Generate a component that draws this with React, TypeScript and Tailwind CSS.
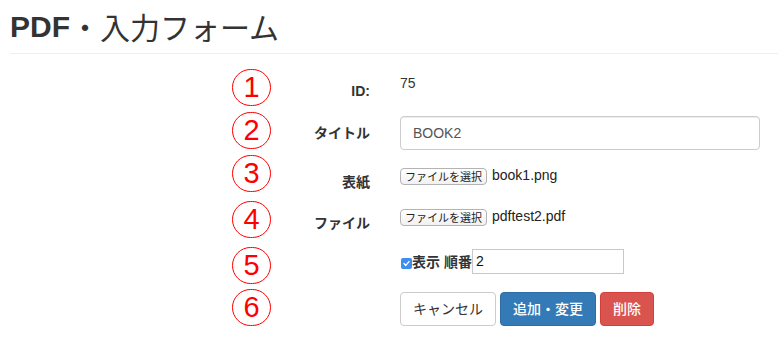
import React from 'react';

function Circle({ n, className }: { n: string; className: string }) {
  return (
    <div
      className={
        'flex h-[37px] w-[39px] items-center justify-center rounded-full border-[1.5px] border-[#ff0000] ' +
        className
      }
    >
      <span className="font-['Liberation_Sans',sans-serif] text-[29px] leading-none text-[#ff0000]">{n}</span>
    </div>
  );
}

function FileBtn() {
  return (
    <span className="mt-[3px] flex h-[17px] items-center rounded-[4px] border border-[#b3b3b3] bg-gradient-to-b from-white to-[#f1f1f1] px-[4px] font-['Noto_Sans_CJK_JP',sans-serif] text-[11px] leading-none text-[#222]">
      ファイルを選択
    </span>
  );
}

export default function App() {
  return (
    <div className="h-[346px] w-[778px] overflow-hidden bg-white font-['Liberation_Sans','Noto_Sans_CJK_JP',sans-serif] text-[14px] text-[#333]">
      <div className="pl-[10px]">
        <h2 className="flex h-[44px] items-end pb-[1px] text-[30px] leading-[33px] text-[#333]">
          <span className="font-bold">PDF</span>
          <span className="font-['Noto_Sans_CJK_JP',sans-serif] font-normal">・入力フォーム</span>
        </h2>
        <div className="mt-[9px] h-px bg-[#eeeeee]" />
      </div>

      <div className="flex">
        <div className="ml-[232px] flex w-[40px] flex-col">
          <Circle n="1" className="mt-[15px]" />
          <Circle n="2" className="mt-[6px]" />
          <Circle n="3" className="mt-[6px]" />
          <Circle n="4" className="mt-[9px]" />
          <Circle n="5" className="mt-[9px]" />
          <Circle n="6" className="mt-[5px]" />
        </div>

        <div className="flex flex-col">
          {/* ID */}
          <div className="mt-[19px] flex h-[28px]">
            <div className="w-[98px] pt-[8px] text-right font-bold leading-[20px]">ID:</div>
            <div className="ml-[30px] w-[360px] leading-[20px]">75</div>
          </div>

          {/* タイトル */}
          <div className="mt-[15px] flex h-[34px]">
            <div className="w-[98px] pt-[7px] text-right font-bold leading-[20px]">タイトル</div>
            <div className="ml-[30px] w-[360px]">
              <input
                defaultValue="BOOK2"
                className="h-[34px] w-[360px] rounded-[4px] border border-[#cccccc] px-[12px] text-[14px] text-[#555] shadow-[inset_0_1px_1px_rgba(0,0,0,0.075)] outline-none"
              />
            </div>
          </div>

          {/* 表紙 */}
          <div className="mt-[15px] flex h-[27px]">
            <div className="w-[98px] pt-[7px] text-right font-bold leading-[20px]">表紙</div>
            <div className="ml-[30px] flex w-[360px] items-start">
              <FileBtn />
              <span className="ml-[5px] leading-[20px] text-[#222]">book1.png</span>
            </div>
          </div>

          {/* ファイル */}
          <div className="mt-[14px] flex h-[27px]">
            <div className="w-[98px] pt-[7px] text-right font-bold leading-[20px]">ファイル</div>
            <div className="ml-[30px] flex w-[360px] items-start">
              <FileBtn />
              <span className="ml-[5px] leading-[20px] text-[#222]">pdftest2.pdf</span>
            </div>
          </div>

          {/* 表示 順番 */}
          <div className="mt-[16px] flex h-[25px]">
            <div className="w-[98px]" />
            <div className="ml-[30px] flex w-[360px] items-center">
              <span className="ml-[1px] mt-[3px] flex h-[11px] w-[11px] items-center justify-center rounded-[2px] bg-[#3d8ef0]">
                <svg width="9" height="9" viewBox="0 0 9 9" fill="none">
                  <path d="M2 4.6 L3.8 6.4 L7 2.6" stroke="white" strokeWidth="1.4" strokeLinecap="round" strokeLinejoin="round" />
                </svg>
              </span>
              <span className="font-bold leading-[20px]">表示 順番</span>
              <div className="flex h-[25px] w-[152px] items-center border border-[#c8c8c8] pl-[3px] text-[14px] text-[#111]">
                2
              </div>
            </div>
          </div>

          {/* buttons */}
          <div className="mt-[18px] flex h-[34px]">
            <div className="w-[98px]" />
            <div className="ml-[30px] flex w-[360px] gap-[4px]">
              <button className="h-[34px] rounded-[4px] border border-[#cccccc] bg-white px-[12px] leading-[20px] text-[#333]">
                キャンセル
              </button>
              <button className="h-[34px] rounded-[4px] border border-[#2e6da4] bg-[#337ab7] px-[12px] font-medium leading-[20px] text-white">
                追加・変更
              </button>
              <button className="h-[34px] rounded-[4px] border border-[#d43f3a] bg-[#d9534f] px-[12px] font-medium leading-[20px] text-white">
                削除
              </button>
            </div>
          </div>
        </div>
      </div>
    </div>
  );
}
